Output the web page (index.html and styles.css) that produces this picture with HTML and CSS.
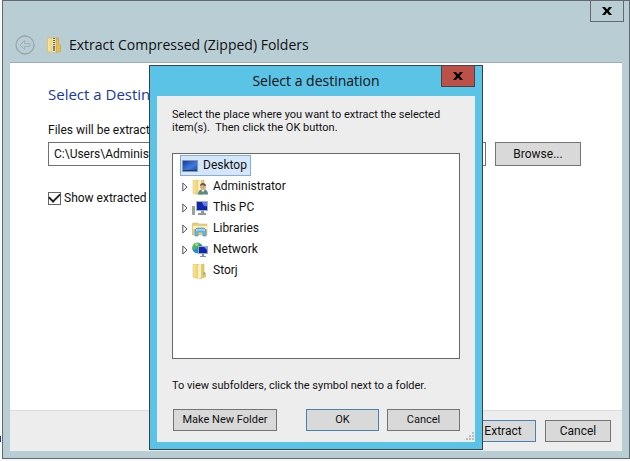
FILE: index.html
```html
<!DOCTYPE html>
<html lang="en">
<head>
<meta charset="utf-8">
<title>Extract Compressed (Zipped) Folders</title>
<link rel="stylesheet" href="styles.css">
</head>
<body>
<svg class="defs" aria-hidden="true">
  <defs>
    <linearGradient id="gold" x1="0" x2="1" y1="0" y2="0"><stop offset="0" stop-color="#f9e99c"/><stop offset="1" stop-color="#e3bd55"/></linearGradient>
    <linearGradient id="screen" x1="0" x2="1" y1="0" y2="1"><stop offset="0" stop-color="#153a9c"/><stop offset="0.6" stop-color="#3f7be0"/><stop offset="1" stop-color="#2050b8"/></linearGradient>
    <symbol id="folder" viewBox="0 0 16 16">
      <path d="M1 1.500h6l2 1v13l-6-.5-2-1z" fill="url(#gold)" stroke="#d8b75e" stroke-width=".5"/>
      <path d="M8 2l4-1v8l1.500 1v4L8 15.500z" fill="#e8c768" stroke="#d3ad4c" stroke-width=".5"/>
      <path d="M6 2l3-1v14l-3 .5z" fill="#fbf2bd"/>
    </symbol>
  </defs>
</svg>
<main class="window">
  <header class="titlebar">
    <button class="close" aria-label="Close window"><svg viewBox="0 0 10 8" width="10" height="8"><path d="M0 0h3l2 2.500L7 0h3L6.700 4 10 8H7L5 5.500 3 8H0l3.300-4z"/></svg></button>
    <div class="caption">
      <svg class="back" viewBox="0 0 20 20" width="20" height="20"><circle cx="10" cy="10" r="9" fill="none" stroke="#98a5aa" stroke-width="1.300"/><path d="M5 10l4.500-4.500v3H15v3H9.500v3z" fill="none" stroke="#a2afb4"/></svg>
      <svg class="zip" viewBox="0 0 16 16" width="16" height="16"><path d="M1.500 1h9v14h-9z" fill="url(#gold)" stroke="#dcb650" stroke-width=".6"/><path d="M10 1h2.500v6l2 1v6.500L10 15.500z" fill="#e6bd4e" stroke="#c79c35" stroke-width=".6"/><path d="M8 1v14" stroke="#f5f0d4" stroke-width="3"/><path d="M8 1v12" stroke="#536273" stroke-width="2" stroke-dasharray="1 1"/><path d="M7 10h2v4H7z" fill="#768692"/></svg>
      <h1>Extract Compressed (Zipped) Folders</h1>
    </div>
  </header>
  <section class="page">
    <h2>Select a Destination and Extract Files</h2>
    <label for="path">Files will be extracted to this folder:</label>
    <div class="path-row"><input id="path" type="text" value="C:\Users\Administrator\Desktop"><button class="button browse">Browse...</button></div>
    <label class="check"><input type="checkbox" checked>Show extracted files when complete</label>
  </section>
  <footer class="actions"><button class="button primary extract">Extract</button><button class="button cancel">Cancel</button></footer>
</main>
<section class="dialog" role="dialog" aria-labelledby="dialog-title">
  <header class="dialog-title"><h2 id="dialog-title">Select a destination</h2>
    <button class="close danger" aria-label="Close dialog"><svg viewBox="0 0 10 8" width="10" height="8"><path d="M0 0h3l2 2.500L7 0h3L6.700 4 10 8H7L5 5.500 3 8H0l3.300-4z"/></svg></button>
  </header>
  <div class="dialog-body">
    <p>Select the place where you want to extract the selected<br>item(s).&nbsp; Then click the OK button.</p>
    <ul class="tree">
      <li class="selected"><svg viewBox="0 0 16 16" width="16" height="16"><path d="M0 2h16v12H0z" fill="#8798b0"/><path d="M1 3h14v9H1z" fill="url(#screen)"/><path d="M1 12h14v1H1z" fill="#263b59"/></svg><span>Desktop</span></li>
      <li><svg class="arrow" viewBox="0 0 6 10" width="6" height="10"><path d="M.8 1l4.200 4-4.200 4z"/></svg><svg viewBox="0 0 16 16" width="16" height="16"><use href="#folder"/><path d="M6 15.500c0-4 2-5 5-5s5 1 5 5z" fill="#568c82"/><path d="M9 10.500h4l-2 3z" fill="#eee"/><circle cx="11" cy="7.500" r="3" fill="#d9ae86"/><path d="M8 7c0-4 6-4 6 0-2 0-3-1-4-1z" fill="#64564a"/></svg><span>Administrator</span></li>
      <li><svg class="arrow" viewBox="0 0 6 10" width="6" height="10"><path d="M.8 1l4.200 4-4.200 4z"/></svg><svg viewBox="0 0 16 16" width="16" height="16"><path d="M0 6h3v9H0z" fill="#9ba39f"/><path d="M1 8h1v2H1z" fill="#58ca43"/><path d="M4 1h12v10H4z" fill="#a6b1c4"/><path d="M5 2h10v8H5z" fill="#1028a8"/><path d="M10 2h5v4c-3 1-4-1-5-4z" fill="#657cf0"/><path d="M9 11h3v2h2v2H6v-2h3z" fill="#8d98a5"/></svg><span>This PC</span></li>
      <li><svg class="arrow" viewBox="0 0 6 10" width="6" height="10"><path d="M.8 1l4.200 4-4.200 4z"/></svg><svg viewBox="0 0 16 16" width="16" height="16"><path d="M0 3l1-1h5l1 1h8v11H0z" fill="#e8ce7c" stroke="#d1b35d" stroke-width=".5"/><path d="M1 5h14v3H1z" fill="#faf0bb"/><path d="M3 15V9l2-2h7l2 2v6h-3v-4H6v4z" fill="#6bb9e3" stroke="#398bc3" stroke-width=".6"/><path d="M4 9h9" stroke="#c3e9f8"/></svg><span>Libraries</span></li>
      <li><svg class="arrow" viewBox="0 0 6 10" width="6" height="10"><path d="M.8 1l4.200 4-4.200 4z"/></svg><svg viewBox="0 0 16 16" width="16" height="16"><circle cx="5.500" cy="6" r="5.300" fill="#2489cf"/><path d="M1 3C3 0 6 0 8 1L7 4 5 5 4 8 1 7z" fill="#56b843"/><path d="M3 2l2-1 1 2-2 1z" fill="#b6e68c"/><path d="M6 4h10v8H6z" fill="#9aabc4"/><path d="M7 5h8v6H7z" fill="#1028b0"/><path d="M12 5h3v3z" fill="#7e93ff"/><path d="M10 12h2v2h2v1H8v-1h2z" fill="#7f91a6"/></svg><span>Network</span></li>
      <li><i class="arrow"></i><svg viewBox="0 0 16 16" width="16" height="16"><use href="#folder"/><path d="M12 9v3" stroke="#5da4cd"/></svg><span>Storj</span></li>
    </ul>
    <p class="hint">To view subfolders, click the symbol next to a folder.</p>
    <div class="dialog-actions"><button class="button new-folder">Make New Folder</button><button class="button primary">OK</button><button class="button">Cancel</button></div>
    <svg class="grip" viewBox="0 0 9 9" width="9" height="9"><path d="M7 0h2v2H7zM7 3h2v2H7zM7 6h2v2H7zM4 3h2v2H4zM4 6h2v2H4zM1 6h2v2H1z" fill="#bcbcbc"/></svg>
  </div>
</section>
</body>
</html>
```
FILE: styles.css
```css
* { box-sizing: border-box; }
body { margin: 0; padding: 0 0 2px 2px; min-height: 100vh; display: flex; background: #f7f9fa; color: #111; font: 12px/16px Roboto, "Open Sans", sans-serif; position: relative; }
body::before { content: ""; position: absolute; left: 0; bottom: 19px; width: 1px; height: 6px; background: #253c6b; }
h1, h2, p, ul { margin: 0; padding: 0; font-weight: 400; }
button, input { font: inherit; color: inherit; }
.defs { position: absolute; width: 0; height: 0; }
.window { flex: 1; display: flex; flex-direction: column; background: #b9ced4; border: 1px solid #65686d; padding: 0 7px 7px; }
.titlebar { height: 62px; display: flex; flex-direction: column; border-bottom: 1px solid #9dacb5; }
.close { width: 34px; height: 22px; padding: 0; display: grid; place-items: center; align-self: flex-end; flex: none; margin: -1px -2px 0 0; background: transparent; border: 1px solid #65686d; }
.danger { align-self: start; background: #bd5147; border-color: #40464b; }
.caption { display: flex; align-items: center; padding: 13px 5px 0; }
.zip { margin: 0 7px 0 11px; }
h1 { font: 14px/20px "Open Sans", "Noto Sans", sans-serif; }
.page { flex: 1; background: #fff; padding: 20px 41px 0 38px; }
.page h2 { font: 15px/22px "Open Sans", "Noto Sans", sans-serif; color: #173a9c; margin-bottom: 17px; }
.page label { display: block; }
.path-row { display: flex; gap: 9px; margin: 4px 0 24px; }
.path-row input { flex: 1; min-width: 0; height: 24px; border: 1px solid #707070; padding: 0 5px; background: #fff; }
.button { height: 22px; padding: 0; background: #d9d9d9; border: 1px solid #747474; line-height: 18px; }
.primary { border-color: #4782b5; }
.path-row .browse { width: 86px; height: 24px; }
.page .check { display: flex; align-items: center; gap: 3px; }
.check input { appearance: none; width: 13px; height: 13px; margin: 0; border: 1px solid #666; background: #fff; display: grid; place-items: center; }
.check input::after { content: ""; width: 9px; height: 5px; margin-bottom: 3px; border: solid #222; border-width: 0 0 2px 2px; transform: rotate(-45deg); }
.actions { height: 41px; display: flex; justify-content: flex-end; align-items: center; gap: 9px; padding-right: 11px; background: #ededed; border-top: 1px solid #dcdcdc; }
.extract, .cancel { width: 66px; }
.dialog { position: absolute; left: 149px; top: 65px; width: 334px; padding: 0 7px 7px; background: #5bc3e6; border: 1px solid #35434b; }
.dialog-title { display: grid; grid-template-columns: 34px 1fr 34px; height: 30px; }
.dialog-title h2 { grid-column: 2; text-align: center; font: 14px/29px "Open Sans", "Noto Sans", sans-serif; }
.dialog-body { position: relative; background: #ededed; padding: 12px 15px 11px; font: 11px/13px Roboto, "Open Sans", sans-serif; }
.dialog-body p { white-space: nowrap; }
.tree { list-style: none; height: 206px; margin: 19px 0 20px; padding: 1px 7px; background: #fff; border: 1px solid #686868; font: 12px/19px Roboto, "Open Sans", sans-serif; }
.tree li { display: flex; align-items: center; height: 21px; padding-left: 2px; }
.tree span { margin-left: 5px; }
.tree .selected { width: max-content; padding: 0 3px 0 1px; border: 1px solid #84aedb; background: #d5e6fa; }
.arrow { width: 6px; flex: none; margin-right: 4px; fill: #fff; stroke: #555; }
.dialog-actions { display: flex; gap: 8px; padding: 17px 0 0 1px; }
.dialog-actions .button { width: 73px; }
.dialog-actions .new-folder { width: 104px; margin-right: auto; }
.grip { position: absolute; right: 1px; bottom: 1px; }
```
